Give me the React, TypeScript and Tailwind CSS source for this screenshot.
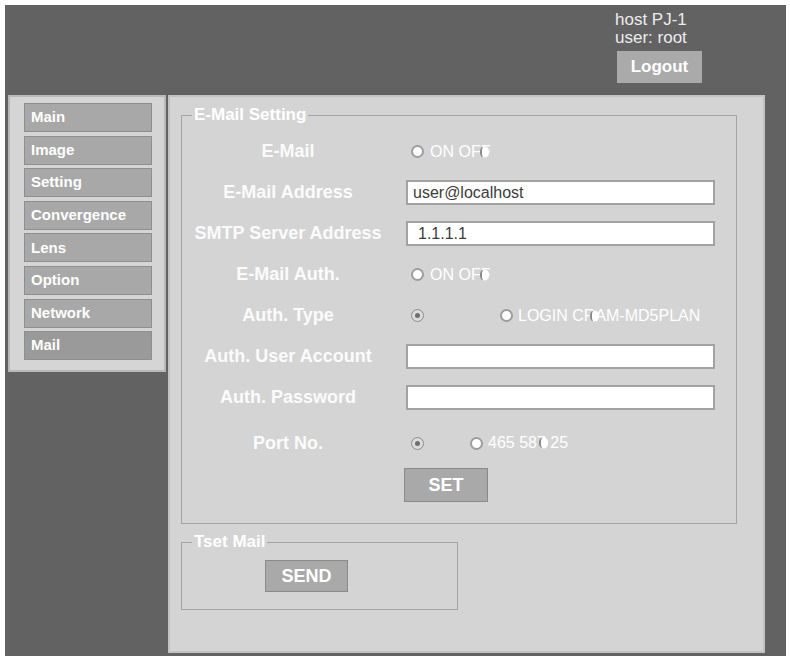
const navItems = [
  "Main",
  "Image",
  "Setting",
  "Convergence",
  "Lens",
  "Option",
  "Network",
  "Mail",
];

function Radio({ checked = false }: { checked?: boolean }) {
  if (checked) {
    return (
      <span className="flex h-[13px] w-[13px] shrink-0 items-center justify-center rounded-full border border-[#8c8c8c] bg-[#dcdcdc]">
        <span className="h-[5px] w-[5px] rounded-full bg-[#6e6e6e]" />
      </span>
    );
  }
  return (
    <span className="block h-[13px] w-[13px] shrink-0 rounded-full border-2 border-[#9d9d9d] bg-white" />
  );
}

function Blot({ left }: { left: number }) {
  // half-hidden radio drawn on top of the option text
  return (
    <span
      className="absolute top-1/2 h-[11px] w-[9px] -translate-y-1/2 rounded-full border-l-2 border-[#8a8a8a] bg-white"
      style={{ left }}
    />
  );
}

function Row({
  label,
  className = "h-[41px]",
  children,
}: {
  label: string;
  className?: string;
  children: React.ReactNode;
}) {
  return (
    <div className={`flex items-center ${className}`}>
      <div className="w-[212px] text-center text-[18px] font-bold text-[#fbfbfb]">
        {label}
      </div>
      <div className="ml-[12px] flex items-center">{children}</div>
    </div>
  );
}

function TextBox({ value = "", pad = "pl-[5px]" }: { value?: string; pad?: string }) {
  return (
    <div
      className={`flex h-[25px] w-[309px] items-center border-2 border-[#a2a2a2] bg-white text-[16px] text-[#3c3c3c] ${pad}`}
    >
      {value}
    </div>
  );
}

export default function App() {
  return (
    <div
      className="h-[656px] w-[790px] overflow-hidden bg-white pt-[5px] pl-[5px]"
      style={{ fontFamily: '"Liberation Sans", Arial, sans-serif' }}
    >
      <div className="flex h-[660px] w-[781px] flex-col bg-[#636262]">
        {/* header */}
        <div className="flex h-[90px] justify-end pr-[84px]">
          <div className="flex flex-col items-start pt-[6px]">
            <div className="text-[17px] leading-[18px] text-[#ececec]">host PJ-1</div>
            <div className="text-[17px] leading-[18px] text-[#ececec]">user: root</div>
            <button className="mt-[4px] ml-[2px] flex h-[32px] w-[85px] items-center justify-center bg-[#aaaaaa] text-[17px] font-bold text-white">
              Logout
            </button>
          </div>
        </div>

        <div className="flex items-start">
          {/* menu */}
          <nav className="ml-[3px] flex h-[277px] w-[158px] flex-col gap-[3.6px] border-2 border-[#b9b9b9] bg-[#d5d5d5] pt-[6px] pl-[14px]">
            {navItems.map((item) => (
              <div
                key={item}
                className={`flex h-[29px] w-[128px] items-center border border-[#8e8e8e] pl-[6px] text-[15px] font-bold text-white ${
                  item === "Mail" ? "bg-[#9a9a9a]" : "bg-[#a8a8a8]"
                }`}
              >
                {item}
              </div>
            ))}
          </nav>

          {/* content */}
          <main className="ml-[2px] h-[558px] w-[597px] border-2 border-[#c2c2c2] bg-[#d4d4d4] pt-[8px] pl-[11px]">
            <fieldset className="w-[556px] border border-[#a4a4a4] pb-[21px]">
              <legend className="ml-[10px] px-[2px] text-[17px] leading-[20px] font-bold text-white">
                E-Mail Setting
              </legend>
              <div className="pt-[6px]">
                <Row label="E-Mail">
                  <div className="flex items-center pl-[5px] text-[16px] text-white">
                    <Radio />
                    <span className="relative ml-[6px]">
                      ON OFF
                      <Blot left={50} />
                    </span>
                  </div>
                </Row>
                <Row label="E-Mail Address">
                  <TextBox value="user@localhost" />
                </Row>
                <Row label="SMTP Server Address">
                  <TextBox value="1.1.1.1" pad="pl-[10px]" />
                </Row>
                <Row label="E-Mail Auth.">
                  <div className="flex items-center pl-[5px] text-[16px] text-white">
                    <Radio />
                    <span className="relative ml-[6px]">
                      ON OFF
                      <Blot left={50} />
                    </span>
                  </div>
                </Row>
                <Row label="Auth. Type">
                  <div className="flex items-center pl-[5px] text-[16px] text-white">
                    <Radio checked />
                    <span className="ml-[76px]">
                      <Radio />
                    </span>
                    <span className="relative ml-[5px]">
                      LOGIN CRAM-MD5PLAN
                      <Blot left={72} />
                    </span>
                  </div>
                </Row>
                <Row label="Auth. User Account">
                  <TextBox />
                </Row>
                <Row label="Auth. Password">
                  <TextBox />
                </Row>
                <Row label="Port No." className="h-[50px]">
                  <div className="flex items-center pl-[5px] text-[16px] text-white">
                    <Radio checked />
                    <span className="ml-[46px]">
                      <Radio />
                    </span>
                    <span className="relative ml-[5px]">
                      465 587 25
                      <Blot left={51} />
                    </span>
                  </div>
                </Row>
                <div className="pl-[222px]">
                  <button className="flex h-[34px] w-[84px] items-center justify-center border border-[#8a8a8a] bg-[#a9a9a9] text-[18px] font-bold text-white">
                    SET
                  </button>
                </div>
              </div>
            </fieldset>

            <fieldset className="mt-[8px] w-[277px] border border-[#a4a4a4] pb-[17px]">
              <legend className="ml-[10px] px-[2px] text-[17px] leading-[20px] font-bold text-white">
                Tset Mail
              </legend>
              <div className="pt-[8px] pl-[83px]">
                <button className="flex h-[32px] w-[83px] items-center justify-center border border-[#8a8a8a] bg-[#a9a9a9] text-[18px] font-bold text-white">
                  SEND
                </button>
              </div>
            </fieldset>
          </main>
        </div>
      </div>
    </div>
  );
}
